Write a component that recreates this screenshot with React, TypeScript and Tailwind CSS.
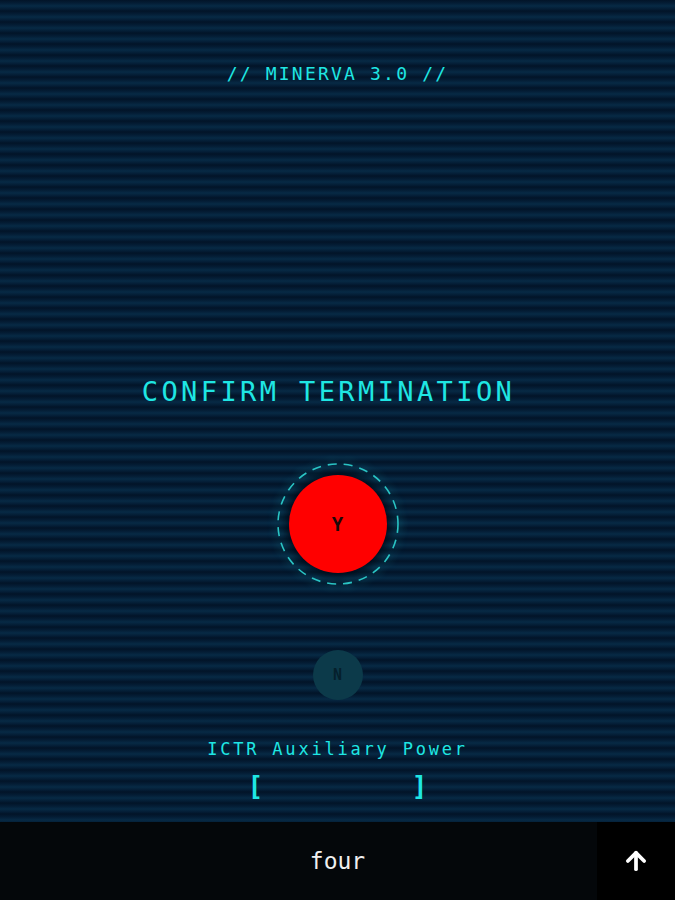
import React from "react";
import { ArrowUp } from "lucide-react";

const mono = { fontFamily: '"DejaVu Sans Mono", "Liberation Mono", monospace' };

export default function App() {
  return (
    <div className="w-[675px] h-[900px] flex flex-col overflow-hidden" style={mono}>
      <div className="h-[822px] flex flex-col items-center bg-[repeating-linear-gradient(180deg,#021428_0px,#041d35_3px,#072a45_6px,#041d35_9px,#021428_11px)]">
        <div className="mt-[62px] h-[24px] leading-[24px] text-[18px] tracking-[2.2px] text-[#1fe6e3]">
          // MINERVA 3.0 //
        </div>
        <div className="mt-[290px] mr-[18px] h-[32px] leading-[32px] text-[27px] tracking-[3.4px] text-[#1fe6e3]">
          CONFIRM TERMINATION
        </div>
        <div className="mt-[55px] relative w-[122px] h-[122px] flex items-center justify-center">
          <svg
            className="absolute inset-0 drop-shadow-[0_0_5px_#1ab3c0]"
            width="122"
            height="122"
            viewBox="0 0 122 122"
          >
            <circle cx="61" cy="61" r="60" fill="none" stroke="#2ac4c4" strokeWidth="1.6" strokeDasharray="9 7" />
          </svg>
          <div className="w-[98px] h-[98px] rounded-full bg-[#ff0000] shadow-[0_0_8px_3px_rgba(0,10,20,0.7)] flex items-center justify-center text-[19px] font-bold text-[#1a0808]">
            Y
          </div>
        </div>
        <div className="mt-[65px] w-[50px] h-[50px] rounded-full bg-[#0c3a4a] flex items-center justify-center text-[15px] font-bold text-[#05202c]">
          N
        </div>
        <div className="mt-[39px] h-[20px] leading-[20px] text-[17px] tracking-[2.8px] text-[#1fe6e3]">
          ICTR Auxiliary Power
        </div>
        <div className="mt-[13px] h-[28px] w-[180px] flex justify-between items-center text-[26px] font-bold leading-[28px] text-[#1fe6e3]">
          <span>[</span>
          <span>]</span>
        </div>
      </div>
      <div className="h-[78px] flex bg-[#04070a]">
        <div className="flex-1 flex items-center justify-center pl-[78px] text-[23px] text-[#f0f0f0]">
          four
        </div>
        <div className="w-[78px] h-full bg-black flex items-center justify-center text-white">
          <ArrowUp size={28} strokeWidth={3.2} />
        </div>
      </div>
    </div>
  );
}
